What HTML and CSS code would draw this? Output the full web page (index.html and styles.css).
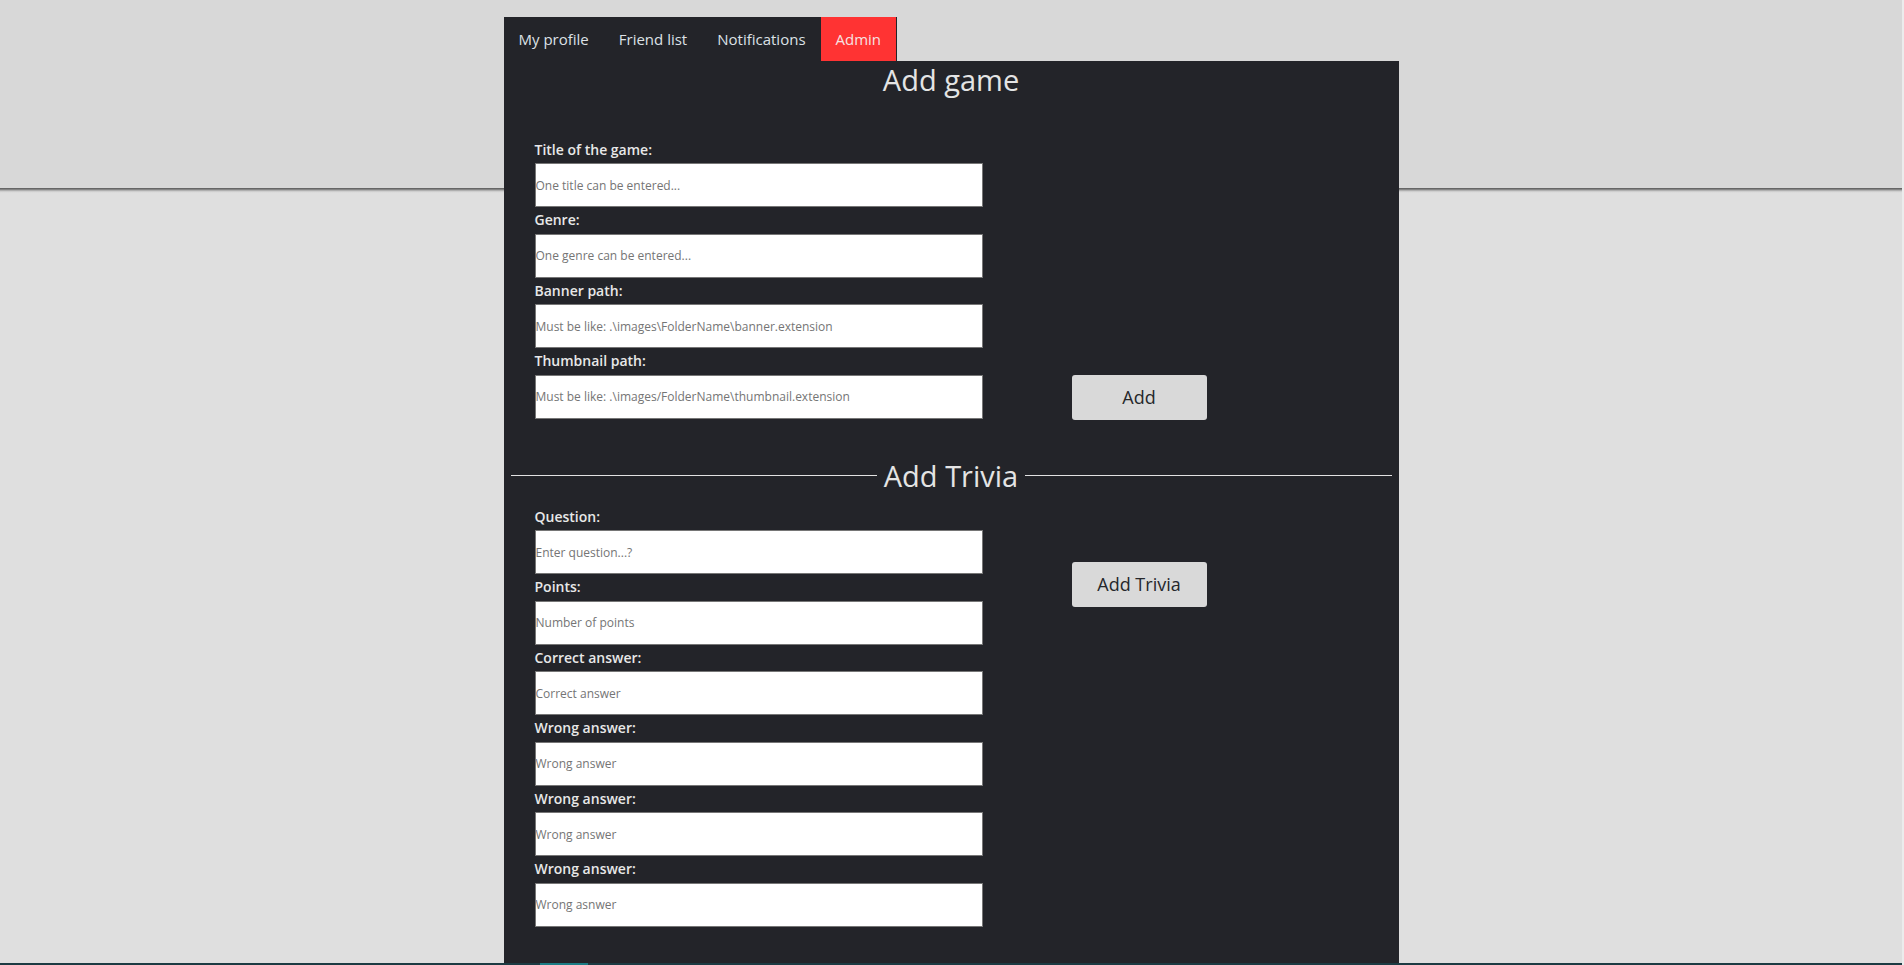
FILE: index.html
```html
<!DOCTYPE html>
<html lang="en">
<head>
<meta charset="utf-8">
<title>Admin</title>
<link rel="stylesheet" href="styles.css">
</head>
<body>
<div class="wrap">
  <nav class="tabs">
    <a class="tab" href="#">My profile</a>
    <a class="tab" href="#">Friend list</a>
    <a class="tab" href="#">Notifications</a>
    <a class="tab active" href="#">Admin</a>
  </nav>
  <main class="panel">
    <h2 class="title">Add game</h2>
    <form class="row row-game">
      <div class="fields">
        <label class="lbl">Title of the game:</label>
        <input class="inp" type="text" placeholder="One title can be entered...">
        <label class="lbl">Genre:</label>
        <input class="inp" type="text" placeholder="One genre can be entered...">
        <label class="lbl">Banner path:</label>
        <input class="inp" type="text" placeholder="Must be like: .\images\FolderName\banner.extension">
        <label class="lbl">Thumbnail path:</label>
        <input class="inp" type="text" placeholder="Must be like: .\images/FolderName\thumbnail.extension">
      </div>
      <button class="btn btn-add" type="button">Add</button>
    </form>
    <h2 class="title divider">Add Trivia</h2>
    <form class="row row-trivia">
      <div class="fields">
        <label class="lbl">Question:</label>
        <input class="inp" type="text" placeholder="Enter question...?">
        <label class="lbl">Points:</label>
        <input class="inp" type="text" placeholder="Number of points">
        <label class="lbl">Correct answer:</label>
        <input class="inp" type="text" placeholder="Correct answer">
        <label class="lbl">Wrong answer:</label>
        <input class="inp" type="text" placeholder="Wrong answer">
        <label class="lbl">Wrong answer:</label>
        <input class="inp" type="text" placeholder="Wrong answer">
        <label class="lbl">Wrong answer:</label>
        <input class="inp" type="text" placeholder="Wrong asnwer">
      </div>
      <button class="btn btn-trivia" type="button">Add Trivia</button>
    </form>
  </main>
</div>
<footer class="foot"><span class="foot-mark"></span></footer>
</body>
</html>
```
FILE: styles.css
```css
html, body {
  margin: 0;
  padding: 0;
}
body {
  height: 965px;
  overflow: hidden;
  box-sizing: border-box;
  border-right: 2px solid #ececec;
  font-family: "Open Sans", "Noto Sans", sans-serif;
  background: linear-gradient(to bottom,
    #d8d8d8 0, #d8d8d8 188px,
    #5e5e5e 188px, #6e6e6e 189px,
    #9a9a9a 190px, #c4c4c4 191px,
    #d8d8d8 192px, #dfdfdf 193px, #dfdfdf 100%);
  display: flex;
  flex-direction: column;
}
.wrap {
  width: 895px;
  margin: 0 auto;
  padding-top: 17px;
  flex: 1;
  display: flex;
  flex-direction: column;
}
.tabs {
  display: flex;
  align-self: flex-start;
  background: #232429;
  height: 44px;
  padding-right: 1px;
}
.tab {
  display: block;
  padding: 0 15px;
  line-height: 44px;
  font-size: 15px;
  font-weight: 500;
  color: #dde1e6;
  text-decoration: none;
}
.tab.active {
  background: #ff3333;
  color: #f6e2e2;
}
.panel {
  flex: 1;
  background: #232429;
  padding: 0 7px 0;
  color: #e6e6e6;
}
.title {
  margin: 0;
  font-size: 29px;
  font-weight: 500;
  line-height: 38px;
  text-align: center;
  color: #e4e4e4;
}
.divider {
  display: flex;
  align-items: center;
  gap: 7px;
  margin-top: 38px;
}
.divider::before,
.divider::after {
  content: "";
  flex: 1;
  height: 1px;
  background: #e2e2e2;
}
.row {
  display: flex;
  padding-left: 24px;
}
.row-game {
  margin-top: 37.8px;
  align-items: flex-end;
}
.row-trivia {
  margin-top: 8.8px;
  align-items: flex-start;
}
.fields {
  width: 448px;
  display: flex;
  flex-direction: column;
}
.lbl {
  display: block;
  font-size: 14px;
  font-weight: 600;
  line-height: 26.5px;
  color: #e8e8e8;
}
.inp {
  display: block;
  box-sizing: border-box;
  width: 448px;
  height: 44px;
  margin: 0;
  padding: 0;
  border: 1px solid #767676;
  background: #ffffff;
  font-family: "Open Sans", "Noto Sans", sans-serif;
  font-size: 12px;
  color: #333;
  outline: none;
}
.inp::placeholder {
  color: #757575;
}
.btn {
  width: 135px;
  height: 45px;
  margin-left: 89px;
  border: none;
  border-radius: 3px;
  background: #d9d9d9;
  color: #26272b;
  font-family: "Open Sans", "Noto Sans", sans-serif;
  font-size: 18px;
  padding: 0;
}
.btn-add {
  margin-bottom: -1px;
}
.btn-trivia {
  margin-top: 58px;
}
.foot {
  height: 2px;
  background: #1c3b43;
  display: flex;
  flex-shrink: 0;
}
.foot-mark {
  margin-left: 540px;
  width: 48px;
  background: #1b7c84;
}
```
